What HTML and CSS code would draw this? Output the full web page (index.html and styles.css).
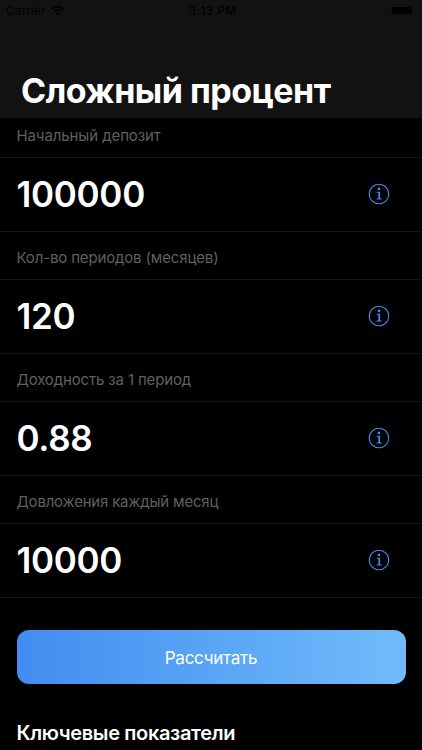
FILE: index.html
```html
<!DOCTYPE html>
<html lang="ru">
<head>
<meta charset="utf-8">
<meta name="viewport" content="width=device-width">
<title>Сложный процент</title>
<link rel="stylesheet" href="styles.css">
</head>
<body>
<svg class="defs" width="0" height="0" aria-hidden="true">
  <symbol id="info" viewBox="0 0 22 22">
    <circle cx="11" cy="11" r="9.8" fill="none" stroke="currentColor" stroke-width="1.1"/>
    <circle cx="10.9" cy="5.9" r="1.3" fill="currentColor"/>
    <path d="M8.7 8.7h3.4v6.7h1.6v1H8.5v-1h1.9V9.7H8.7z" fill="currentColor"/>
  </symbol>
</svg>
<header class="header">
  <div class="status">
    <div class="carrier"><span>Carrier</span>
      <svg class="wifi" viewBox="0 0 14 11"><path d="M1 4.2Q7-1 13 4.2M3.2 6.6Q7 3.4 10.8 6.6" fill="none" stroke="currentColor" stroke-width="1.9"/><path d="M4.8 8.2Q7 6.6 9.2 8.2L7 10.5z" fill="currentColor"/></svg>
    </div>
    <time>3:13 PM</time>
    <div class="battery"><i></i></div>
  </div>
  <h1>Сложный процент</h1>
</header>
<main>
  <section class="field"><label>Начальный депозит</label><div class="value"><span>100000</span><svg class="info"><use href="#info"/></svg></div></section>
  <section class="field"><label>Кол-во периодов (месяцев)</label><div class="value"><span>120</span><svg class="info"><use href="#info"/></svg></div></section>
  <section class="field"><label>Доходность за 1 период</label><div class="value"><span>0.88</span><svg class="info"><use href="#info"/></svg></div></section>
  <section class="field"><label>Довложения каждый месяц</label><div class="value"><span>10000</span><svg class="info"><use href="#info"/></svg></div></section>
  <button class="submit">Рассчитать</button>
  <h2>Ключевые показатели</h2>
</main>
</body>
</html>
```
FILE: styles.css
```css
* { box-sizing: border-box; }
body { margin: 0; height: 750px; overflow: hidden; background: #000; color: #fff; font-family: Inter, "Liberation Sans", sans-serif; }
.defs { display: block; height: 0; }
.header { height: 118px; background: #121212; }
.status { height: 22px; padding: 0 8px 1px 6px; display: grid; grid-template-columns: 1fr auto 1fr; align-items: center; color: #020202; font-size: 12px; }
.carrier { display: flex; align-items: center; gap: 6px; }
.wifi { width: 14px; height: 11px; }
.status time { font-weight: 500; letter-spacing: .35px; padding-left: 5px; }
.battery { justify-self: end; width: 24px; height: 11px; padding: 1px; border: 1px solid #0e0e0e; border-radius: 3px; }
.battery i { display: block; height: 7px; background: #000; border-radius: 1px; }
h1 { margin: 48px 0 0 21px; font-size: 34px; line-height: 42px; letter-spacing: -.52px; white-space: nowrap; }
.field { height: 122px; }
.field:first-child { height: 114px; }
.field label { display: flex; align-items: flex-end; height: 47px; padding: 0 16.5px 12px; font-size: 15px; line-height: 18px; letter-spacing: -.15px; color: #5f5f61; }
.field:first-child label { height: 39px; letter-spacing: -.1px; }
.field:last-of-type label { letter-spacing: -.2px; }
.value { height: 75px; padding: 0 32px 2px 16.5px; border: solid #151515; border-width: 1px 0; display: flex; justify-content: space-between; align-items: center; font-size: 35px; font-weight: 600; letter-spacing: -.3px; }
.info { width: 22px; height: 22px; color: #4390f5; }
.submit { display: block; width: 389px; height: 54px; margin: 32px 0 0 16.5px; padding: 1px 0 0; border: 0; border-radius: 12px; color: #fff; background: linear-gradient(90deg, #438cf1, #70bcfa); font: 17px Inter, sans-serif; letter-spacing: -.25px; }
h2 { margin: 36px 0 0 16.5px; font-size: 20px; line-height: 26px; font-weight: 600; letter-spacing: -.35px; }
```
